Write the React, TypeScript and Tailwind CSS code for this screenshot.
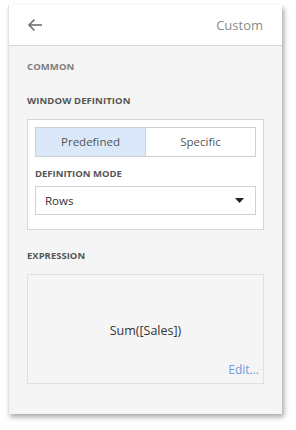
import React from "react";

export default function App() {
  const font = { fontFamily: '"Open Sans", "Noto Sans", sans-serif' };
  return (
    <div className="w-[296px] h-[430px] bg-white pt-[5px] pl-[8px]" style={font}>
      <div className="w-[274px] h-[409px] bg-[#f5f5f5] border-l border-[#e2e2e2] shadow-[2px_3px_5px_rgba(0,0,0,0.35)] flex flex-col">
        <div className="h-[41px] bg-white border-b border-[#d6d6d6] flex items-center justify-between pl-[18px] pr-[19px]">
          <svg width="16" height="14" viewBox="0 0 16 14" fill="none" stroke="#6e6e6e" strokeWidth="1.6">
            <path d="M15 7H2" />
            <path d="M7.5 1.5L2 7l5.5 5.5" />
          </svg>
          <span className="text-[13px] text-[#8a8a8a] leading-none">Custom</span>
        </div>
        <div className="px-[18px] flex flex-col">
          <div className="mt-[14px] h-[14px] text-[9.5px] font-bold text-[#7d7d7d] leading-[14px] tracking-[0.1px]">COMMON</div>
          <div className="mt-[20px] h-[14px] text-[9.5px] font-bold text-[#555] leading-[14px] tracking-[0.1px]">WINDOW DEFINITION</div>
          <div className="mt-[11px] h-[111px] bg-white border border-[#d6d6d6] px-[7px] pt-[7px]">
            <div className="flex h-[30px] border border-[#d2d2d2]">
              <div className="flex-1 bg-[#dae8fa] border-r border-[#d2d2d2] flex items-center justify-center text-[11.5px] text-[#555]">Predefined</div>
              <div className="flex-1 bg-white flex items-center justify-center text-[11.5px] text-[#555]">Specific</div>
            </div>
            <div className="mt-[10px] h-[14px] text-[9.5px] font-bold text-[#555] leading-[14px]">DEFINITION MODE</div>
            <div className="mt-[5px] h-[29px] border border-[#d2d2d2] flex items-center justify-between pl-[9px] pr-[11px]">
              <span className="text-[11.5px] text-[#333]">Rows</span>
              <svg width="9" height="5" viewBox="0 0 9 5"><path d="M0 0h9L4.5 5z" fill="#222" /></svg>
            </div>
          </div>
          <div className="mt-[19px] h-[14px] text-[9.5px] font-bold text-[#555] leading-[14px]">EXPRESSION</div>
          <div className="mt-[11px] h-[110px] border border-[#e0e0e0] flex flex-col">
            <div className="mt-[47px] text-center text-[12.5px] text-[#333] leading-[18px]">Sum([Sales])</div>
            <div className="mt-[22px] text-right pr-[4px] text-[12px] text-[#6c9ae0] leading-[16px]">Edit...</div>
          </div>
        </div>
      </div>
    </div>
  );
}
